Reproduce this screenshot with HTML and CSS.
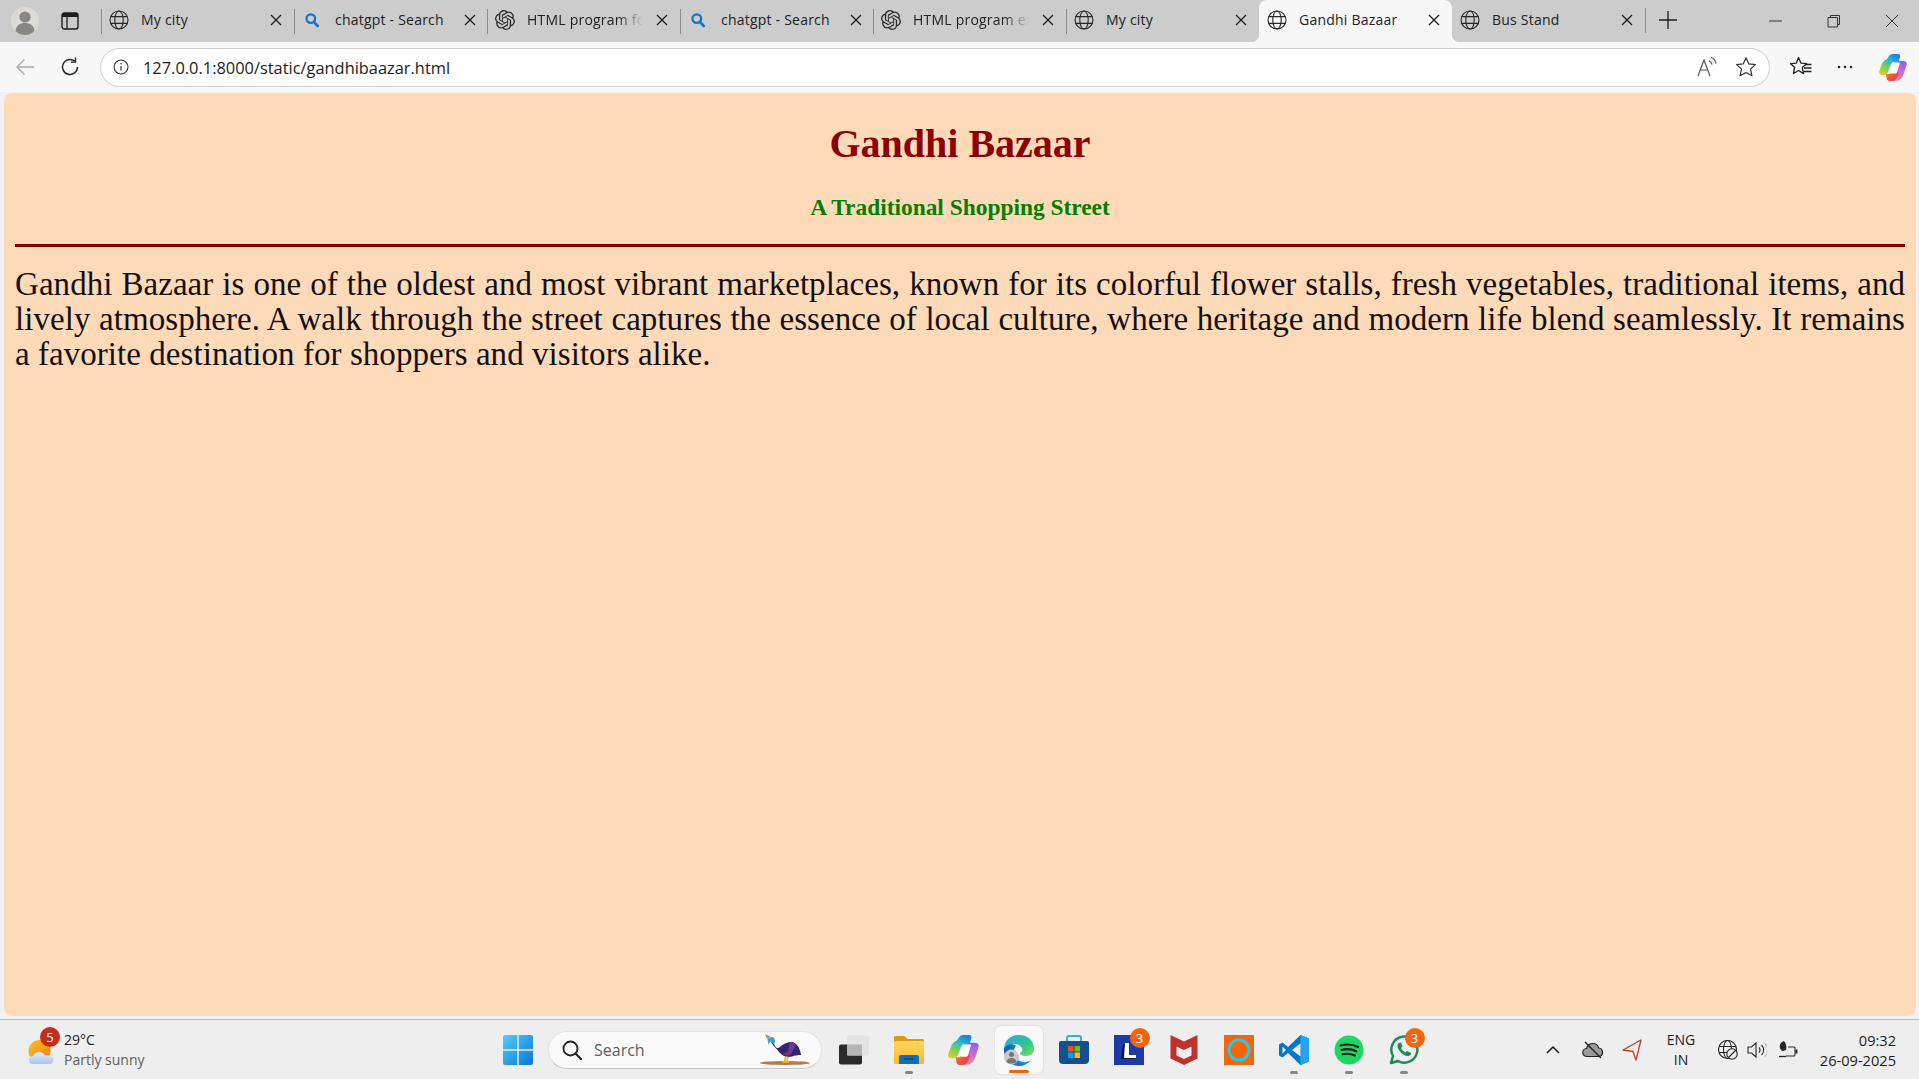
FILE: index.html
```html
<!DOCTYPE html>
<html lang="en">
<head>
<meta charset="utf-8">
<title>Gandhi Bazaar</title>
<link rel="stylesheet" href="styles.css">
</head>
<body>
<svg class="defs" width="0" height="0" aria-hidden="true">
  <defs>
    <linearGradient id="cpA" x1="0.7" y1="0" x2="0.1" y2="1"><stop offset="0" stop-color="#1f7fe8"/><stop offset=".35" stop-color="#22c3c8"/><stop offset=".65" stop-color="#7ed24a"/><stop offset="1" stop-color="#f5c52e"/></linearGradient>
    <linearGradient id="cpB" x1="0" y1="0" x2="1" y2="1"><stop offset="0" stop-color="#f9a02b"/><stop offset=".6" stop-color="#ee4d36"/><stop offset="1" stop-color="#e5398f"/></linearGradient>
    <linearGradient id="cpC" x1="0.6" y1="0" x2="0.4" y2="1"><stop offset="0" stop-color="#8a63ee"/><stop offset=".55" stop-color="#d667d8"/><stop offset="1" stop-color="#f58a8a"/></linearGradient>
    <symbol id="globe" viewBox="0 0 20 20"><g fill="none" stroke="#262626" stroke-width="1.1"><circle cx="10" cy="10" r="9"/><ellipse cx="10" cy="10" rx="4.2" ry="9"/><path d="M1.6 6.6h16.8M1.6 13.4h16.8"/></g></symbol>
    <symbol id="close" viewBox="0 0 12 12"><path d="M1 1l10 10M11 1L1 11" stroke="#1c1c1c" stroke-width="1.3" fill="none"/></symbol>
    <symbol id="bing" viewBox="0 0 16 16"><circle cx="6.8" cy="6.6" r="4.3" fill="none" stroke="#1a73c8" stroke-width="2.3"/><path d="M10 10l3.8 4" stroke="#1a73c8" stroke-width="2.6" stroke-linecap="round"/></symbol>
    <symbol id="gpt" viewBox="0 0 24 24"><path fill="#2b2b2b" d="M22.2819 9.8211a5.9847 5.9847 0 0 0-.5157-4.9108 6.0462 6.0462 0 0 0-6.5098-2.9A6.0651 6.0651 0 0 0 4.9807 4.1818a5.9847 5.9847 0 0 0-3.9977 2.9 6.0462 6.0462 0 0 0 .7427 7.0966 5.98 5.98 0 0 0 .511 4.9107 6.051 6.051 0 0 0 6.5146 2.9001A5.9847 5.9847 0 0 0 13.2599 24a6.0557 6.0557 0 0 0 5.7718-4.2058 5.9894 5.9894 0 0 0 3.9977-2.9001 6.0557 6.0557 0 0 0-.7475-7.0729zm-9.022 12.6081a4.4755 4.4755 0 0 1-2.8764-1.0408l.1419-.0804 4.7783-2.7582a.7948.7948 0 0 0 .3927-.6813v-6.7369l2.02 1.1686a.071.071 0 0 1 .038.052v5.5826a4.504 4.504 0 0 1-4.4945 4.4944zm-9.6607-4.1254a4.4708 4.4708 0 0 1-.5346-3.0137l.142.0852 4.783 2.7582a.7712.7712 0 0 0 .7806 0l5.8428-3.3685v2.3324a.0804.0804 0 0 1-.0332.0615L9.74 19.9502a4.4992 4.4992 0 0 1-6.1408-1.6464zM2.3408 7.8956a4.485 4.485 0 0 1 2.3655-1.9728V11.6a.7664.7664 0 0 0 .3879.6765l5.8144 3.3543-2.0201 1.1685a.0757.0757 0 0 1-.071 0l-4.8303-2.7865A4.504 4.504 0 0 1 2.3408 7.872zm16.5963 3.8558L13.1038 8.364 15.1192 7.2a.0757.0757 0 0 1 .071 0l4.8303 2.7913a4.4944 4.4944 0 0 1-.6765 8.1042v-5.6772a.79.79 0 0 0-.407-.667zm2.0107-3.0231l-.142-.0852-4.7735-2.7818a.7759.7759 0 0 0-.7854 0L9.409 9.2297V6.8974a.0662.0662 0 0 1 .0284-.0615l4.8303-2.7866a4.4992 4.4992 0 0 1 6.6802 4.66zM8.3065 12.863l-2.02-1.1638a.0804.0804 0 0 1-.038-.0567V6.0742a4.4992 4.4992 0 0 1 7.3757-3.4537l-.142.0805L8.704 5.459a.7948.7948 0 0 0-.3927.6813zm1.0976-2.3654l2.602-1.4998 2.6069 1.4998v2.9994l-2.5974 1.4997-2.6067-1.4997Z"/></symbol>
    <symbol id="copilot" viewBox="0 0 28 27">
      <path d="M15 7h9q4.500 0 3.500 4L25 19q-2.300 8-9 8h-3l2-7z" fill="url(#cpC)"/>
      <path d="M7 20h4l3-7 6 6-2.500 5.500Q16 27 13 27h-2q-3 0-3.500-3z" fill="url(#cpB)"/>
      <path d="M10 2Q11 0 14 0h5q2.800 0 2 3l-1.500 5H15q-2 0-3 2L8.500 19Q7.500 21 5 21H3Q-.5 21 .3 17L3 9.500Q5 6 8 5z" fill="url(#cpA)"/>
      <path d="M14.500 8.500h5.500q1 0 .7 1L18 18.500q-.4 1-1.500 1H12q-1 0-.7-1L13 10q.4-1.500 1.500-1.500z" fill="#fff"/>
    </symbol>
  </defs>
</svg>

<div class="browser">
  <header class="tabstrip">
    <div class="strip-left">
      <svg class="avatar" viewBox="0 0 28 28"><circle cx="14" cy="14" r="14" fill="#dcdad6"/><circle cx="14" cy="10" r="5.6" fill="#8a8782"/><path d="M4.5 24c1-6 4.5-8 9.500-8s8.500 2 9.500 8c-2.500 2.700-6 4-9.500 4s-7-1.300-9.500-4z" fill="#8a8782"/></svg>
      <svg class="tabs-btn" viewBox="0 0 18 18"><rect x="1" y="1" width="16" height="16" rx="2.500" fill="none" stroke="#1c1c1c" stroke-width="1.4"/><path d="M1 2.500a1.500 1.500 0 0 1 1.500-1.500h13a1.500 1.500 0 0 1 1.500 1.500V5H1z" fill="#1c1c1c"/><path d="M6 5v12" stroke="#1c1c1c" stroke-width="1.300"/></svg>
    </div>
    <div class="tab"><svg class="tab-ico"><use href="#globe"/></svg><span class="tab-title">My city</span><svg class="tab-x"><use href="#close"/></svg></div>
    <div class="tab"><svg class="tab-ico tab-ico-sm"><use href="#bing"/></svg><span class="tab-title">chatgpt - Search</span><svg class="tab-x"><use href="#close"/></svg></div>
    <div class="tab"><svg class="tab-ico"><use href="#gpt"/></svg><span class="tab-title tab-fade">HTML program fo</span><svg class="tab-x"><use href="#close"/></svg></div>
    <div class="tab"><svg class="tab-ico tab-ico-sm"><use href="#bing"/></svg><span class="tab-title">chatgpt - Search</span><svg class="tab-x"><use href="#close"/></svg></div>
    <div class="tab"><svg class="tab-ico"><use href="#gpt"/></svg><span class="tab-title tab-fade">HTML program ex</span><svg class="tab-x"><use href="#close"/></svg></div>
    <div class="tab"><svg class="tab-ico"><use href="#globe"/></svg><span class="tab-title">My city</span><svg class="tab-x"><use href="#close"/></svg></div>
    <div class="tab tab-active"><svg class="tab-ico"><use href="#globe"/></svg><span class="tab-title">Gandhi Bazaar</span><svg class="tab-x"><use href="#close"/></svg></div>
    <div class="tab tab-after"><svg class="tab-ico"><use href="#globe"/></svg><span class="tab-title">Bus Stand</span><svg class="tab-x"><use href="#close"/></svg></div>
    <div class="strip-sep"></div>
    <svg class="new-tab" viewBox="0 0 18 18"><path d="M9 0v18M0 9h18" stroke="#1c1c1c" stroke-width="1.300" fill="none"/></svg>
    <div class="win-controls">
      <svg class="win-btn" viewBox="0 0 14 14"><path d="M0 7h13" stroke="#333" stroke-width="1" fill="none"/></svg>
      <svg class="win-btn" viewBox="0 0 14 14"><path d="M1 3.500h9.500v9.500H1z" fill="none" stroke="#333" stroke-width="1"/><path d="M3.500 3.500V1.500h9v9h-2" fill="none" stroke="#333" stroke-width="1"/></svg>
      <svg class="win-btn" viewBox="0 0 14 14"><path d="M1 1l12 12M13 1L1 13" stroke="#333" stroke-width="1" fill="none"/></svg>
    </div>
  </header>

  <nav class="toolbar">
    <svg class="tool-back" viewBox="0 0 20 18"><path d="M19 9H2M9.500 1.500L2 9l7.500 7.500" fill="none" stroke="#a9a9a9" stroke-width="1.300"/></svg>
    <svg class="tool-reload" viewBox="0 0 20 20"><path d="M17.500 10a7.500 7.500 0 1 1-2.600-5.700" fill="none" stroke="#222" stroke-width="1.400"/><path d="M15.500 0.500v4.600h-4.600" fill="none" stroke="#222" stroke-width="1.400"/></svg>
    <div class="address">
      <svg class="addr-info" viewBox="0 0 16 16"><circle cx="8" cy="8" r="7" fill="none" stroke="#333" stroke-width="1.100"/><path d="M8 7v4.500" stroke="#333" stroke-width="1.200"/><circle cx="8" cy="4.800" r=".8" fill="#333"/></svg>
      <span class="addr-url">127.0.0.1:8000/static/gandhibaazar.html</span>
      <svg class="addr-read" viewBox="0 0 22 22"><path d="M2 20L8 4l6 16M4.500 14h7" fill="none" stroke="#555" stroke-width="1.200"/><path d="M13 5c1.800.6 2.800 1.800 3 3.500M15 1.500c2.700.8 4.500 3 4.800 6" fill="none" stroke="#555" stroke-width="1.200"/></svg>
      <svg class="addr-star" viewBox="0 0 22 22"><path d="M11 1.800l2.800 6.100 6.600.7-4.900 4.500 1.400 6.600L11 16.400l-5.900 3.300 1.400-6.600L1.600 8.600l6.600-.7z" fill="none" stroke="#333" stroke-width="1.200" stroke-linejoin="round"/></svg>
    </div>
    <svg class="tool-fav" viewBox="0 0 22 22"><path d="M8.500 1.500l2.400 5.600 5.800.6-4.400 3.900 1.300 6L8.500 14.500l-5.100 3 1.300-6L.6 7.700l5.800-.6z" fill="none" stroke="#222" stroke-width="1.300" stroke-linejoin="round"/><path d="M15 8.500h6.500M14 12h7.500M14 15.500h7.500" stroke="#222" stroke-width="1.300"/></svg>
    <svg class="tool-dots" viewBox="0 0 16 4"><circle cx="2" cy="2" r="1.300" fill="#222"/><circle cx="8" cy="2" r="1.300" fill="#222"/><circle cx="14" cy="2" r="1.300" fill="#222"/></svg>
    <svg class="tool-copilot"><use href="#copilot"/></svg>
  </nav>

  <main class="viewport">
    <article class="page">
      <h1 class="page-title">Gandhi Bazaar</h1>
      <h3 class="page-sub">A Traditional Shopping Street</h3>
      <hr class="page-rule">
      <p class="page-text">Gandhi Bazaar is one of the oldest and most vibrant marketplaces, known for its colorful flower stalls, fresh vegetables, traditional items, and lively atmosphere. A walk through the street captures the essence of local culture, where heritage and modern life blend seamlessly. It remains a favorite destination for shoppers and visitors alike.</p>
    </article>
  </main>

  <footer class="taskbar">
    <div class="weather">
      <div class="weather-ico">
        <svg viewBox="0 0 28 28" class="weather-svg">
          <defs>
            <linearGradient id="sun" x1="0" y1="0" x2="1" y2="1"><stop offset="0" stop-color="#fbc02d"/><stop offset="1" stop-color="#f57c00"/></linearGradient>
            <linearGradient id="cloud" x1="0" y1="0" x2="0" y2="1"><stop offset="0" stop-color="#e4eefb"/><stop offset="1" stop-color="#a9c6f2"/></linearGradient>
          </defs>
          <circle cx="12.500" cy="13" r="11" fill="url(#sun)"/>
          <path d="M6 26a4 4 0 0 1 0-8c1-3 4-4.500 7-4 2.500.3 4 2 5 3.500 2-.5 5-.5 7 1.500 2 2 1.500 5.500-1 7z" fill="url(#cloud)"/>
        </svg>
        <span class="badge badge-red">5</span>
      </div>
      <div class="weather-text"><span class="weather-temp">29°C</span><span class="weather-desc">Partly sunny</span></div>
    </div>

    <div class="task-slot">
      <svg class="ico-30" viewBox="0 0 29 29">
        <defs><linearGradient id="win" x1="0" y1="0" x2="1" y2="1"><stop offset="0" stop-color="#4fd0fb"/><stop offset="1" stop-color="#0a74d8"/></linearGradient></defs>
        <path d="M2 0h11.800v13.800H0V2a2 2 0 0 1 2-2zM15.200 0H27a2 2 0 0 1 2 2v11.800H15.200zM0 15.200h13.800V29H2a2 2 0 0 1-2-2zM15.200 15.200H29V27a2 2 0 0 1-2 2H15.200z" fill="url(#win)"/>
      </svg>
    </div>

    <div class="search">
      <svg class="search-glass" viewBox="0 0 20 20"><circle cx="8.500" cy="8.500" r="7" fill="none" stroke="#222" stroke-width="1.800"/><path d="M13.500 13.500l5.500 5.500" stroke="#222" stroke-width="2.200" stroke-linecap="round"/></svg>
      <span class="search-label">Search</span>
      <svg class="search-bird" viewBox="0 0 52 32">
        <ellipse cx="25" cy="29" rx="25" ry="2" fill="#b87a4a"/>
        <path d="M26 20l-1.500 8M31 20l-3.500 4-1 4M22 28h7" fill="none" stroke="#e8b92e" stroke-width="1.600"/>
        <path d="M11 8c2 0 3 2 4 4 1.500 2.500 3 2.500 5 1 3-3 8-5.500 12-5 5 1 8 6 9 13-4 0-6 .5-9 1.500-5 1-10-.5-12.500-4-2-3-5-5-8.500-10.500z" fill="#33246f"/>
        <path d="M30 8l2-.3c1.500.6 3 1.600 4 3.300l-5 9-3.500.5c.5-4 1-8 2.500-12.500z" fill="#6a3a9a"/>
        <path d="M22 20c3 2 7 2 9 .5l-1-4c-3 2-6 3-8 3.500z" fill="#7a2f6a"/>
        <path d="M7.500 5l4-2c2.500 0 3.500 2 3.500 4.500l-1 3.500c-.5-2-2.500-3.500-4-3.500L8.500 11z" fill="#2fa3d9"/>
        <path d="M5 0l6 3-4 2z" fill="#b8866a"/>
      </svg>
    </div>

    <div class="task-slot task-first">
      <svg class="ico-30" viewBox="0 0 30 29"><rect x="0" y="9" width="23" height="20" rx="2" fill="#2a2a2a"/><rect x="8" y="0" width="22" height="20" rx="2" fill="#e2e2e2" opacity=".9"/><rect x="8" y="9" width="15" height="11" fill="#b5b5b5"/></svg>
    </div>

    <div class="task-slot">
      <svg class="ico-30" viewBox="0 0 30 28">
        <defs><linearGradient id="fold" x1="0" y1="0" x2="0" y2="1"><stop offset="0" stop-color="#ffd75e"/><stop offset="1" stop-color="#fbb829"/></linearGradient></defs>
        <path d="M1.500 0h9l3 3h15a1.500 1.500 0 0 1 1.500 1.500V7H0V1.500A1.500 1.500 0 0 1 1.500 0z" fill="#dc9a0e"/>
        <rect x="0" y="5" width="30" height="23" rx="1.500" fill="url(#fold)"/>
        <path d="M5 28v-7a2 2 0 0 1 2-2h16a2 2 0 0 1 2 2v7z" fill="#0a6fc4"/>
        <path d="M10 23h10" stroke="#0b3f7a" stroke-width="1.500"/>
      </svg>
      <i class="run-dot"></i>
    </div>

    <div class="task-slot">
      <svg class="ico-copilot"><use href="#copilot"/></svg>
    </div>

    <div class="task-slot task-active">
      <svg class="ico-32" viewBox="0 0 32 32">
        <defs>
          <linearGradient id="edgeA" x1="0" y1="0" x2="1" y2="1"><stop offset="0" stop-color="#2aa7e0"/><stop offset=".6" stop-color="#2fc58e"/><stop offset="1" stop-color="#7ee05a"/></linearGradient>
          <linearGradient id="edgeB" x1="0" y1="0" x2="1" y2="0"><stop offset="0" stop-color="#0a5fb0"/><stop offset="1" stop-color="#1f9fdc"/></linearGradient>
        </defs>
        <path d="M1 14C2 6 8 1 16 1c9 0 15 6 15 14 0 5-4 7-8 7-3 0-6-1-6-3 2-1 3-3 2-5-2-4-8-5-12-3-3 1-5 2-6 3z" fill="url(#edgeA)"/>
        <path d="M1 14c3-4 9-5 12-2-3 3-3 9 1 13 4 4 10 4 14 1-3 4-7 6-12 6C8 32 0 24 1 14z" fill="url(#edgeB)"/>
        <circle cx="8.500" cy="23" r="7.500" fill="#c9c9c9"/>
        <circle cx="8.500" cy="20.500" r="2.500" fill="#777"/>
        <path d="M3.500 28c.5-3 2.500-4 5-4s4.500 1 5 4c-1.500 1-3 1.500-5 1.500s-3.500-.5-5-1.500z" fill="#777"/>
      </svg>
      <i class="run-bar"></i>
    </div>

    <div class="task-slot">
      <svg class="ico-30" viewBox="0 0 30 30">
        <path d="M8 7V3a2 2 0 0 1 2-2h10a2 2 0 0 1 2 2v4" fill="none" stroke="#2bb0e8" stroke-width="2"/>
        <path d="M0 8a2 2 0 0 1 2-2h26a2 2 0 0 1 2 2v17a4 4 0 0 1-4 4H4a4 4 0 0 1-4-4z" fill="#14508f"/>
        <rect x="9" y="11" width="5.500" height="5.500" fill="#f25022"/><rect x="15.500" y="11" width="5.500" height="5.500" fill="#7fba00"/><rect x="9" y="17.500" width="5.500" height="5.500" fill="#00a4ef"/><rect x="15.500" y="17.500" width="5.500" height="5.500" fill="#ffb900"/>
      </svg>
    </div>

    <div class="task-slot">
      <div class="l-tile"><svg class="ico-30" viewBox="0 0 30 30"><rect width="30" height="30" fill="#1d3aa8"/><path d="M9 9h4.500v12H21v3H7z" fill="#0c1a50"/><path d="M11 8h4v12h7v3H10z" fill="#fff"/></svg><span class="badge badge-orange">3</span></div>
    </div>

    <div class="task-slot">
      <svg class="ico-30" viewBox="0 0 27 30"><path d="M0 0l13.500 6.500L27 0v23.500L13.500 30 0 23.500z" fill="#c1312c"/><path d="M6 11.500l7.500 3.500 7.500-3.500v9L13.500 24 6 20.500z" fill="#efefef"/></svg>
    </div>

    <div class="task-slot">
      <svg class="ico-30" viewBox="0 0 30 30"><rect width="30" height="30" fill="#f5650a"/><circle cx="15" cy="15" r="10" fill="none" stroke="#27c8e8" stroke-width="3"/><path d="M8 22l-1 3 4-1.500z" fill="#27c8e8"/></svg>
    </div>

    <div class="task-slot">
      <svg class="ico-30" viewBox="0 0 30 30"><path d="M21.500 0L9 12 3.500 7.500 0 9.500v11l3.500 2L9 18l12.500 12 8.500-3.500V3.500z" fill="#0078c8"/><path d="M21.500 0L30 3.500v23L21.500 30z" fill="#22a5ee"/><path d="M21.500 8.500L13 15l8.500 6.500zM3.500 11.500v7L7 15z" fill="#eeeeee"/></svg>
      <i class="run-dot"></i>
    </div>

    <div class="task-slot">
      <svg class="ico-30" viewBox="0 0 30 30"><circle cx="15" cy="15" r="14.500" fill="#1ed760"/><path d="M6.500 10.500c6-1.700 12.500-1.200 17.500 1.500M7.500 15c5-1.400 10.500-1 15 1.300M8.500 19.300c4.300-1 8.800-.7 12.500 1.200" fill="none" stroke="#1a1a1a" stroke-width="2" stroke-linecap="round"/></svg>
      <i class="run-dot"></i>
    </div>

    <div class="task-slot">
      <div class="l-tile"><svg class="ico-30" viewBox="0 0 30 30"><path d="M2 28l2-7a13 13 0 1 1 5 5z" fill="none" stroke="#1d8a55" stroke-width="2.500" stroke-linejoin="round"/><path d="M10 8c-2 1-2 4 0 7 2.500 4 6 6 9 6 2 0 3-2 3-3l-4-2-1.500 1.500c-2-1-3.500-2.500-4.500-4.500l1.500-1.500-1.500-4z" fill="#1d8a55"/></svg><span class="badge badge-orange">3</span></div>
      <i class="run-dot"></i>
    </div>

    <div class="tray">
      <svg class="tray-chev" viewBox="0 0 14 8"><path d="M1 7l6-6 6 6" fill="none" stroke="#1c1c1c" stroke-width="1.500"/></svg>
      <svg class="tray-cloud" viewBox="0 0 22 18"><path d="M5 15.500a4 4 0 0 1-.5-8c.8-3 3-5 6.500-5 3 0 5 2 5.800 4.500a4.300 4.300 0 0 1 .2 8.500z" fill="#9b9b9b" stroke="#222" stroke-width="1.200"/><path d="M3 1l16 16" stroke="#222" stroke-width="1.400"/></svg>
      <svg class="tray-send" viewBox="0 0 20 22"><path d="M19 1L1 11l10 1.500 3 8.500z" fill="none" stroke="#b8431f" stroke-width="1.300" stroke-linejoin="round"/></svg>
      <div class="tray-lang"><span>ENG</span><span>IN</span></div>
      <svg class="tray-globe" viewBox="0 0 20 20"><g fill="none" stroke="#262626" stroke-width="1.100"><circle cx="9.500" cy="9.500" r="9"/><ellipse cx="9.500" cy="9.500" rx="4" ry="9"/><path d="M1 6.500h17M1 12.500h17"/></g><circle cx="14" cy="14" r="5.200" fill="#eee" stroke="#262626" stroke-width="1.100"/><path d="M10.500 17.500l7-7" stroke="#262626" stroke-width="1.100"/></svg>
      <svg class="tray-sound" viewBox="0 0 20 18"><path d="M1 6h3.500L9 2v14l-4.500-4H1z" fill="none" stroke="#262626" stroke-width="1.100"/><path d="M12 6.500a3.500 3.500 0 0 1 0 5M14.500 4a7 7 0 0 1 0 10" fill="none" stroke="#262626" stroke-width="1.100"/><path d="M17.500 2a10 10 0 0 1 0 14" fill="none" stroke="#bbb" stroke-width="1.100"/></svg>
      <svg class="tray-batt" viewBox="0 0 20 18"><path d="M8 15h8a1 1 0 0 0 1-1V7a1 1 0 0 0-1-1h-6" fill="none" stroke="#262626" stroke-width="1.100"/><path d="M17.500 8.500h2v4h-2z" fill="#262626"/><path d="M6 0c-3 1-5 4-4 7 .5 2 2 3 3 3l3-1c1-3 0-7-2-9z" fill="#262626"/><path d="M1 15.500h7" stroke="#262626" stroke-width="1.300"/></svg>
      <div class="tray-clock"><span>09:32</span><span>26-09-2025</span></div>
    </div>
  </footer>
</div>
</body>
</html>
```

FILE: styles.css
```css
* { box-sizing: border-box; }
html, body { margin: 0; padding: 0; height: 100%; overflow: hidden; }
body { font-family: "Open Sans", "Noto Sans", sans-serif; color: #1c1c1c; }
.defs { position: absolute; }

.browser { display: flex; flex-direction: column; height: 1079px; width: 1919px; background: #f7f7f7; }

/* tab strip */
.tabstrip { display: flex; align-items: center; height: 42px; flex: none; background: #cccccc; }
.strip-left { display: flex; align-items: center; width: 101px; flex: none; padding-left: 11px; gap: 22px; }
.avatar { width: 28px; height: 28px; }
.tabs-btn { width: 18px; height: 18px; }

.tab { position: relative; display: flex; align-items: center; width: 193px; height: 42px; flex: none; padding: 0 0 2px 8px; font-size: 14px; letter-spacing: .22px; color: #222; }
.tab::before { content: ""; position: absolute; left: 0; top: 9px; width: 1px; height: 25px; background: #8c8c8c; }
.tab-ico { width: 20px; height: 20px; flex: none; margin-right: 12px; }
.tab-ico-sm { width: 16px; height: 16px; margin-left: 2px; margin-right: 15px; }
.tab-title { flex: none; width: 116px; white-space: nowrap; margin-top: -1px; }
.tab-fade { -webkit-mask-image: linear-gradient(to right, #000 78%, transparent 100%); mask-image: linear-gradient(to right, #000 78%, transparent 100%); }
.tab-x { width: 12px; height: 12px; flex: none; margin-left: 13px; }

.tab-active { background: #f7f7f7; border-radius: 8px 8px 0 0; }
.tab-active::before { left: -8px; top: auto; bottom: 0; width: 8px; height: 8px; background: radial-gradient(circle at 0 0, #cccccc 8px, #f7f7f7 8.500px); }
.tab-active::after { content: ""; position: absolute; right: -8px; bottom: 0; width: 8px; height: 8px; background: radial-gradient(circle at 100% 0, #cccccc 8px, #f7f7f7 8.500px); }
.tab-after::before { display: none; }

.strip-sep { width: 1px; height: 25px; background: #8c8c8c; flex: none; margin-top: -1px; }
.new-tab { width: 18px; height: 18px; margin: -2px 0 0 13px; flex: none; }
.win-controls { display: flex; align-items: center; margin-left: auto; padding-right: 20px; gap: 44px; }
.win-btn { width: 14px; height: 14px; }

/* toolbar */
.toolbar { display: flex; align-items: center; height: 50px; flex: none; background: #f7f7f7; padding: 0 15px 0 15px; }
.tool-back { width: 20px; height: 18px; flex: none; }
.tool-reload { width: 20px; height: 20px; margin-left: 25px; flex: none; }
.address { display: flex; align-items: center; width: 1670px; height: 39px; margin-left: 20px; flex: none; background: #fff; border: 1px solid #cfcfcf; border-radius: 20px; padding-left: 12px; }
.addr-info { width: 16px; height: 16px; flex: none; }
.addr-url { margin-left: 14px; font-size: 16.400px; color: #1c1c1c; }
.addr-read { width: 22px; height: 22px; margin-left: auto; }
.addr-star { width: 22px; height: 22px; margin-left: 17px; margin-right: 12px; }
.tool-fav { width: 22px; height: 22px; margin-left: 20px; flex: none; }
.tool-dots { width: 16px; height: 4px; margin-left: 25px; flex: none; }
.tool-copilot { width: 28px; height: 27px; margin-left: 26px; flex: none; }

/* viewport */
.viewport { flex: 1; min-height: 0; padding: 1px 3px 3px 4px; background: #f1f1f1; border-bottom: 1px solid #bfbfbf; }
.page { height: 100%; border-radius: 8px; background: #ffdab9; padding: 1px 11px; overflow: hidden; }
.page-title { margin: 27px 0 0; font: bold 40px/46px "Liberation Serif", serif; color: #8b0000; text-align: center; }
.page-sub { margin: 26px 0 0; font: bold 23.400px/28px "Liberation Serif", serif; color: #008000; text-align: center; }
.page-rule { margin: 23px 0 0; height: 3px; border: 0; background: #8b0000; }
.page-text { margin: 20px 0 0; font: 33px/35px "Liberation Serif", serif; letter-spacing: .05px; color: #111; text-align: justify; }

/* taskbar */
.taskbar { display: flex; align-items: center; height: 59px; flex: none; background: #eeeeee; }
.weather { display: flex; align-items: center; width: 490px; flex: none; padding-left: 27px; }
.weather-ico { position: relative; width: 28px; height: 28px; margin-top: 4px; }
.weather-svg { width: 28px; height: 28px; display: block; }
.weather-text { display: flex; flex-direction: column; margin-left: 9px; line-height: 20px; }
.weather-temp { font-size: 14px; color: #1c1c1c; }
.weather-desc { font-size: 14px; color: #5d5d5d; }

.badge { position: absolute; width: 20px; height: 20px; border-radius: 50%; color: #fff; font-size: 13px; line-height: 20px; text-align: center; }
.badge-red { background: #c42b1c; right: -5px; top: -11px; }
.badge-orange { background: #f7630c; right: -6px; top: -7px; }

.task-slot { position: relative; display: flex; align-items: center; justify-content: center; width: 55px; height: 59px; flex: none; }
.task-first { margin-left: 4px; }
.task-active::before { content: ""; position: absolute; left: 4px; right: 3px; top: 6px; bottom: 5px; background: #f8f8f8; border-radius: 6px; box-shadow: 0 0 2px rgba(0,0,0,.15); }
.task-active > svg { position: relative; }
.ico-30 { width: 30px; height: 30px; display: block; }
.ico-32 { width: 32px; height: 32px; display: block; }
.ico-copilot { width: 31px; height: 30px; display: block; }
.l-tile { position: relative; }
.run-dot { position: absolute; left: 50%; margin-left: -4px; bottom: 5px; width: 8px; height: 3px; border-radius: 2px; background: #858585; }
.run-bar { position: absolute; left: 50%; margin-left: -10px; bottom: 6px; width: 20px; height: 3px; border-radius: 2px; background: #f7630c; }

.search { display: flex; align-items: center; width: 274px; height: 38px; margin-left: 3px; flex: none; background: #fafafa; border: 1px solid #e2e2e2; border-bottom-color: #c6c6c6; border-radius: 19px; padding-left: 13px; }
.search-glass { width: 20px; height: 20px; flex: none; }
.search-label { margin-left: 12px; font-size: 16px; color: #5d5d5d; }
.search-bird { width: 52px; height: 32px; margin-left: auto; margin-right: 9px; }

.tray { display: flex; align-items: center; margin-left: auto; padding-right: 23px; }
.tray-chev { width: 14px; height: 8px; }
.tray-cloud { width: 22px; height: 18px; margin-left: 22px; }
.tray-send { width: 20px; height: 22px; margin-left: 18px; }
.tray-lang { display: flex; flex-direction: column; align-items: center; width: 32px; margin-left: 23px; font-size: 14px; line-height: 20px; }
.tray-globe { width: 20px; height: 20px; margin-left: 21px; }
.tray-sound { width: 20px; height: 18px; margin-left: 9px; }
.tray-batt { width: 20px; height: 18px; margin-left: 11px; }
.tray-clock { display: flex; flex-direction: column; align-items: flex-end; width: 88px; margin-left: 10px; font-size: 14.600px; line-height: 20px; }
```
